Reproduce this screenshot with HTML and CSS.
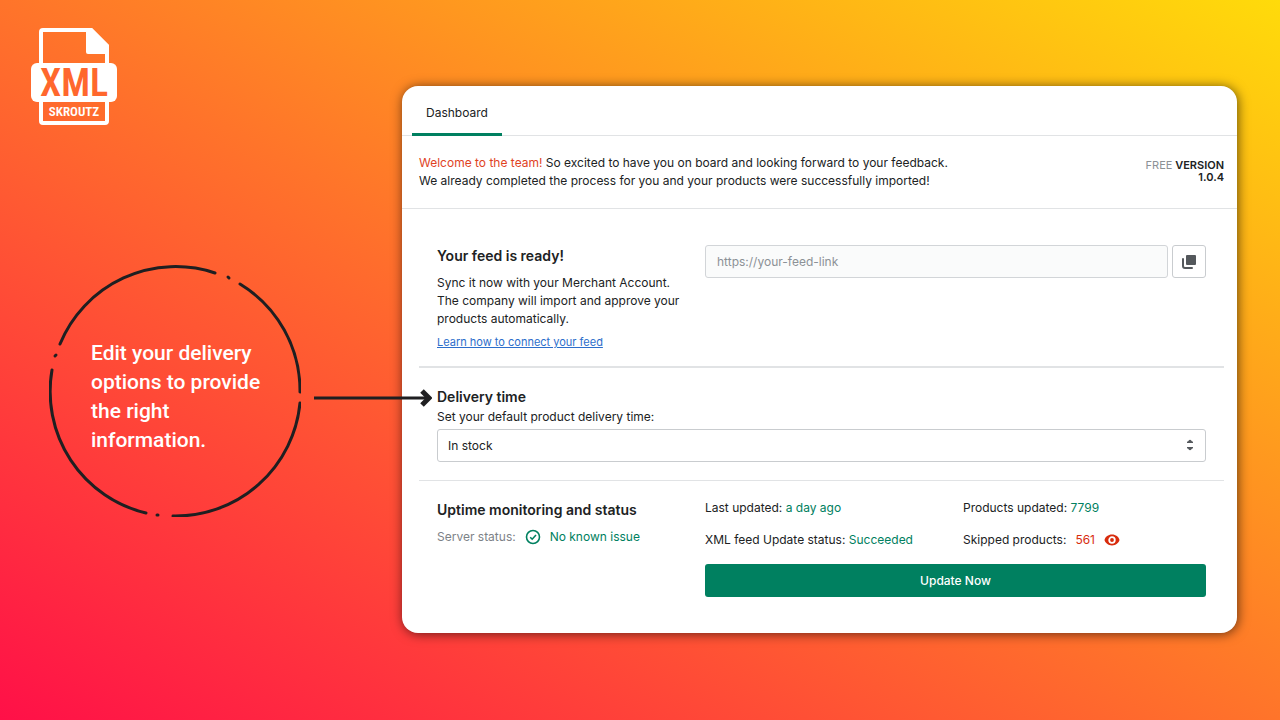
FILE: index.html
```html
<!DOCTYPE html>
<html lang="en">
<head>
    <meta charset="UTF-8">
    <meta name="viewport" content="width=device-width, initial-scale=1.0">
    <title>XML Skroutz - Dashboard</title>
    <link rel="stylesheet" href="styles.css">
</head>
<body>

    <div class="page">
        <aside class="intro">
            <svg class="logo" viewBox="0 0 86 97" role="img" aria-label="XML Skroutz">
                <path class="logo-line" d="M10 36V4Q10 2 12 2H60L76 18V36M10 73V93Q10 95 12 95H74Q76 95 76 93V73"/>
                <path class="logo-fill" d="M55 0H61L78 17V26H57Q55 26 55 24Z"/>
                <rect class="logo-fill" x="0" y="35" width="86" height="39" rx="6"/>
                <text class="logo-xml" x="43" y="68">XML</text>
                <text class="logo-name" x="43" y="88">SKROUTZ</text>
            </svg>

            <div class="callout">
                <svg class="ring" viewBox="0 0 252 252" aria-hidden="true">
                    <path d="M11 79A125 125 0 0 1 166 8"/>
                    <path d="M179 12L180 13"/>
                    <path d="M191 19A125 125 0 0 1 251 127"/>
                    <path d="M251 138A125 125 0 0 1 124 251"/>
                    <path d="M108 250L109 250"/>
                    <path d="M97 248A125 125 0 0 1 3 105"/>
                    <path d="M7 90L6 91"/>
                </svg>
                <p class="callout-text">Edit your delivery options to provide the right information.</p>
                <svg class="arrow" viewBox="0 0 118 20" aria-hidden="true">
                    <path class="arrow-line" d="M0 10H112"/>
                    <path class="arrow-head" d="M108 3L115 10L108 17"/>
                </svg>
            </div>
        </aside>

        <main class="panel">
            <nav class="tabs">
                <a class="tab" href="#dashboard">Dashboard</a>
            </nav>

            <div class="banner">
                <p><span class="welcome">Welcome to the team!</span> So excited to have you on board and looking forward to your feedback.<br>
                We already completed the process for you and your products were successfully imported!</p>
                <p class="version"><span class="plan">FREE</span> VERSION<br>1.0.4</p>
            </div>

            <section class="section feed">
                <div>
                    <h2><label for="feed-link">Your feed is ready!</label></h2>
                    <p>Sync it now with your Merchant Account. The company will import and approve your products automatically.</p>
                    <a class="help-link" href="#connect">Learn how to connect your feed</a>
                </div>
                <div class="feed-link">
                    <input type="text" id="feed-link" placeholder="https://your-feed-link" readonly>
                    <button type="button" class="copy" aria-label="Copy feed link">
                        <svg viewBox="0 0 16 16" aria-hidden="true">
                            <rect x="5" y="1" width="10" height="10" rx="1" fill="#54585c"/>
                            <path d="M2 5V12Q2 14 4 14H11" fill="none" stroke="#54585c" stroke-width="2" stroke-linecap="round"/>
                        </svg>
                    </button>
                </div>
            </section>

            <section class="section delivery">
                <h2>Delivery time</h2>
                <label for="delivery">Set your default product delivery time:</label>
                <div class="select">
                    <select id="delivery">
                        <option>In stock</option>
                    </select>
                    <svg viewBox="0 0 10 12" aria-hidden="true">
                        <path d="M2 3.5L5 1L8 3.5ZM2 8.5L5 11L8 8.5Z" fill="#54585c" stroke="#54585c" stroke-linejoin="round"/>
                    </svg>
                </div>
            </section>

            <section class="section status">
                <div>
                    <h2>Uptime monitoring and status</h2>
                    <p class="server">
                        <span class="muted">Server status:</span>
                        <svg viewBox="0 0 16 16" aria-hidden="true">
                            <circle cx="8" cy="8" r="6.5"/>
                            <path d="M5.2 8.2L7.2 10.2L11 6"/>
                        </svg>
                        <span class="good">No known issue</span>
                    </p>
                </div>
                <div>
                    <div class="stats">
                        <p>Last updated: <span class="good">a day ago</span></p>
                        <p>Products updated: <span class="good">7799</span></p>
                        <p>XML feed Update status: <span class="good">Succeeded</span></p>
                        <p class="skipped">Skipped products: <span class="bad">561</span>
                            <svg viewBox="0 0 16 12" aria-hidden="true">
                                <path d="M8 0.5C4 0.5 1.4 3.2 0.7 5.2Q0.4 6 0.7 6.8C1.4 8.8 4 11.5 8 11.5S14.6 8.8 15.3 6.8Q15.6 6 15.3 5.2C14.6 3.2 12 0.5 8 0.5Z" fill="#d82c0d"/>
                                <circle cx="8" cy="6" r="2.8" fill="none" stroke="#fff" stroke-width="1.8"/>
                            </svg>
                        </p>
                    </div>
                    <button type="button" class="update">Update Now</button>
                </div>
            </section>
        </main>
    </div>

</body>
</html>
```

FILE: styles.css
```css
* {
    box-sizing: border-box;
}
body {
    margin: 0;
    font-family: Inter, "Liberation Sans", sans-serif;
    font-size: 12px;
    line-height: 18px;
    color: #202223;
}
h2, p {
    margin: 0;
}
h2 {
    font-size: 14px;
    line-height: 22px;
    font-weight: 600;
}
input, select, button {
    font: inherit;
    color: inherit;
}
.page {
    display: grid;
    grid-template-columns: 402px 1fr;
    align-items: start;
    min-height: 100vh;
    padding-right: 43px;
    background: linear-gradient(to top right, #ff1048, #ff742a 50%, #ffdb0a);
}

/* Left side */
.intro {
    padding: 28px 0 0 31px;
}
.logo {
    display: block;
    width: 86px;
    height: 97px;
}
.logo-line {
    fill: none;
    stroke: #fff;
    stroke-width: 4;
}
.logo-fill {
    fill: #fff;
}
.logo-xml, .logo-name {
    font-family: "Liberation Sans Narrow", "Roboto Condensed", Roboto, sans-serif;
    font-weight: 600;
    text-anchor: middle;
}
.logo-xml {
    font-size: 38px;
    fill: #ff672d;
}
.logo-name {
    font-size: 13px;
    fill: #fff;
}
.callout {
    position: relative;
    display: grid;
    align-items: center;
    width: 252px;
    margin: 140px 0 0 18px;
}
.ring {
    grid-area: 1 / 1;
    width: 252px;
    height: 252px;
    fill: none;
    stroke: #1f1f21;
    stroke-width: 3;
    stroke-linecap: round;
}
.callout-text {
    grid-area: 1 / 1;
    padding: 12px 36px 0 42px;
    font-family: Roboto, sans-serif;
    font-size: 21px;
    line-height: 29px;
    font-weight: 500;
    color: #fff;
}
.arrow {
    position: absolute;
    left: 265px;
    top: 123px;
    width: 118px;
    height: 20px;
    fill: none;
    stroke: #1f1f21;
}
.arrow-line {
    stroke-width: 3;
}
.arrow-head {
    stroke-width: 5;
}

/* Panel */
.panel {
    margin: 86px 0;
    padding-bottom: 36px;
    background: #fff;
    border-radius: 16px;
    box-shadow: 1px 1px 12px rgba(0, 0, 0, 0.6);
}
.tabs {
    display: flex;
    padding: 0 10px;
    border-bottom: 1px solid #e1e3e5;
}
.tab {
    padding: 18px 14px 11px;
    margin-bottom: -1px;
    border-bottom: 3px solid #008060;
    border-radius: 2px 2px 0 0;
    color: inherit;
    text-decoration: none;
}
.banner {
    display: flex;
    justify-content: space-between;
    padding: 18px 13px 18px 17px;
    border-bottom: 1px solid #e1e3e5;
}
.welcome {
    color: #e0431f;
}
.version {
    padding-top: 5px;
    font-size: 11px;
    line-height: 12px;
    font-weight: 600;
    text-align: right;
}
.plan {
    font-weight: 400;
    color: #8c9196;
}
.section {
    margin: 0 13px 0 17px;
    padding: 18px;
    border-bottom: 1px solid #e1e3e5;
}
.feed, .status {
    display: grid;
    grid-template-columns: 250px 1fr;
    column-gap: 18px;
}
.section h2 + p {
    margin-top: 7px;
}
.feed {
    padding-top: 36px;
    padding-bottom: 17px;
    border-bottom-width: 2px;
}
.help-link {
    display: block;
    margin-top: 7px;
    font-size: 11px;
    line-height: 14px;
    color: #2c6ecb;
}
.feed-link {
    display: flex;
    align-items: start;
    gap: 4px;
}
.feed-link input {
    flex: 1;
    min-width: 0;
    height: 33px;
    padding: 0 11px;
    border: 1px solid #d2d5d8;
    border-radius: 3px;
    background: #fafbfb;
}
.feed-link input::placeholder {
    color: #8c9196;
}
.copy {
    display: grid;
    place-items: center;
    width: 34px;
    height: 33px;
    padding: 0;
    border: 1px solid #c9cccf;
    border-radius: 3px;
    background: #fff;
}
.copy svg {
    width: 16px;
    height: 16px;
}
.delivery label {
    display: block;
    margin-bottom: 3px;
}
.select {
    position: relative;
}
.select select {
    display: block;
    width: 100%;
    height: 33px;
    padding: 0 10px;
    border: 1px solid #c9cccf;
    border-radius: 3px;
    background: #fff;
    appearance: none;
}
.select svg {
    position: absolute;
    right: 11px;
    top: 10px;
    width: 10px;
    height: 12px;
    pointer-events: none;
}
.status {
    padding-bottom: 0;
    border-bottom: 0;
}
.server, .skipped {
    display: flex;
    align-items: center;
    gap: 9px;
}
.server svg {
    width: 16px;
    height: 16px;
    fill: none;
    stroke: #008060;
    stroke-width: 1.6;
}
.skipped svg {
    width: 16px;
    height: 12px;
}
.stats {
    display: grid;
    grid-template-columns: 258px 1fr;
    row-gap: 14px;
    margin-bottom: 15px;
}
.muted {
    color: #7d8287;
}
.good {
    color: #008060;
}
.bad {
    color: #d82c0d;
}
.update {
    display: block;
    width: 100%;
    height: 33px;
    border: 0;
    border-radius: 3px;
    background: #008060;
    color: #fff;
    font-weight: 500;
}
```
